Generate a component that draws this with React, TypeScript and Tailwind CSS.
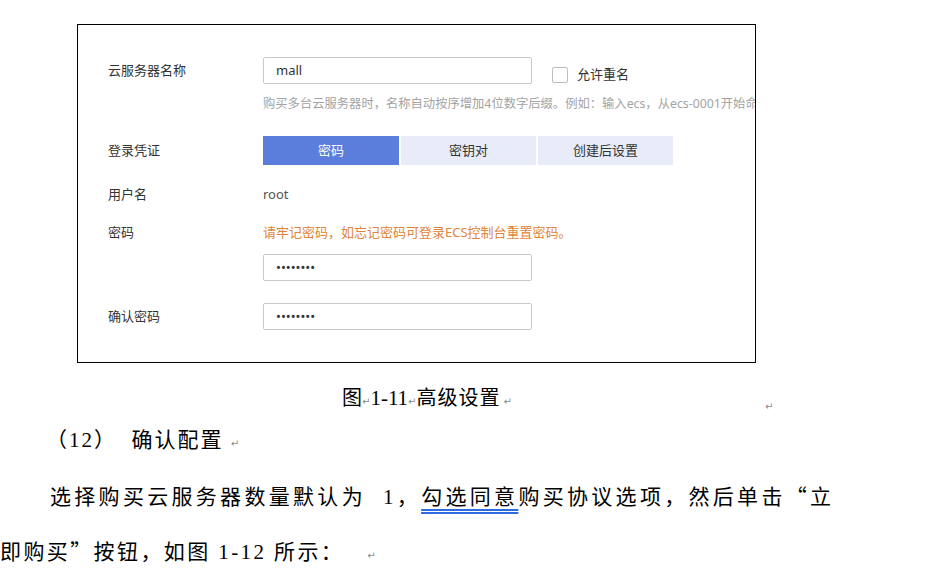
const formFont = { fontFamily: '"Noto Sans", "Noto Sans CJK SC", sans-serif' };
const docFont = { fontFamily: '"Liberation Serif", "Noto Sans CJK SC", serif' };
const cjk = { fontFamily: '"Noto Sans CJK SC", sans-serif' };

function Ret({ className = "" }: { className?: string }) {
  return (
    <span
      className={`text-[10px] text-[#8a8a8a] ${className}`}
      style={{ fontFamily: '"DejaVu Sans", sans-serif' }}
    >
      ↵
    </span>
  );
}

function TextInput({ value }: { value: string }) {
  return (
    <div className="w-[269px] h-[27px] border border-[#c9c9c9] rounded-[2px] flex items-center px-3 text-[13px] text-[#333]">
      {value}
    </div>
  );
}

function FormRow({ label, children, h }: { label?: string; children: React.ReactNode; h: string }) {
  return (
    <div className={`grid grid-cols-[155px_1fr] items-center ${h}`}>
      <div className="text-[13px] text-[#333]">{label}</div>
      <div className="flex items-center">{children}</div>
    </div>
  );
}

export default function App() {
  return (
    <div className="w-[929px] h-[569px] bg-white overflow-hidden">
      {/* 截图框 */}
      <div className="ml-[77px] mt-[24px] w-[679px] h-[339px] border border-black overflow-hidden pl-[30px] pt-[31px]" style={formFont}>
        <FormRow label="云服务器名称" h="h-[27px]">
          <TextInput value="mall" />
          <div className="ml-[20px] pt-[9px] flex items-center">
            <span className="w-[16px] h-[16px] border border-[#bdbdbd] rounded-[2px] bg-white" />
            <span className="ml-[9px] text-[13px] text-[#333]">允许重名</span>
          </div>
        </FormRow>
        <div className="mt-[13px] pl-[155px] h-[16px] leading-[16px] text-[12.3px] text-[#a3a3a3] whitespace-nowrap">
          购买多台云服务器时，名称自动按序增加4位数字后缀。例如：输入ecs，从ecs-0001开始命
        </div>
        <FormRow label="登录凭证" h="h-[29px] mt-[24px]">
          <div className="flex gap-[2px] text-[13px]">
            <div className="w-[136px] h-[29px] flex items-center justify-center bg-[#5b7ddc] text-white">密码</div>
            <div className="w-[135px] h-[29px] flex items-center justify-center bg-[#e8ecf8] text-[#333]">密钥对</div>
            <div className="w-[135px] h-[29px] flex items-center justify-center bg-[#e8ecf8] text-[#333]">创建后设置</div>
          </div>
        </FormRow>
        <FormRow label="用户名" h="h-[20px] mt-[20px]">
          <span className="text-[13px] text-[#555]">root</span>
        </FormRow>
        <FormRow label="密码" h="h-[20px] mt-[18px]">
          <span className="text-[13px] text-[#e0853a]">请牢记密码，如忘记密码可登录ECS控制台重置密码。</span>
        </FormRow>
        <FormRow h="h-[27px] mt-[11px]">
          <TextInput value="••••••••" />
        </FormRow>
        <FormRow label="确认密码" h="h-[27px] mt-[22px]">
          <TextInput value="••••••••" />
        </FormRow>
      </div>

      {/* 文档正文 */}
      <div style={docFont} className="text-black">
        <div className="mt-[23px] h-[24px] grid grid-cols-[765px_1fr] items-center">
          <div className="pl-[342px] flex items-baseline text-[20px] leading-[24px]">
            <span>图</span>
            <Ret />
            <span className="text-[21px]">1-11</span>
            <Ret />
            <span className="tracking-[1px]">高级设置</span>
            <Ret className="ml-[3px]" />
          </div>
          <Ret className="mt-[12px]" />
        </div>
        <div className="mt-[16px] h-[28px] leading-[28px] pl-[46px] text-[21px] tracking-[2px]">
          （12）&nbsp;&nbsp;确认配置&nbsp;<Ret />
        </div>
        <div className="mt-[27px] h-[28px] leading-[28px] ml-[50px] w-[781px] text-[21px] text-justify [text-align-last:justify] whitespace-nowrap">
          选择购买云服务器数量默认为&nbsp;&nbsp;1，
          <span className="underline decoration-double decoration-[#2f6be0] underline-offset-[5px]">勾选同意</span>
          购买协议选项，然后单击<span style={cjk}>“</span>立
        </div>
        <div className="mt-[27px] h-[28px] leading-[28px] text-[21px] tracking-[2.4px]">
          即购买<span style={cjk}>”</span>按钮，如图&nbsp;1-12&nbsp;所示：&nbsp;&nbsp;&nbsp;<Ret />
        </div>
      </div>
    </div>
  );
}
